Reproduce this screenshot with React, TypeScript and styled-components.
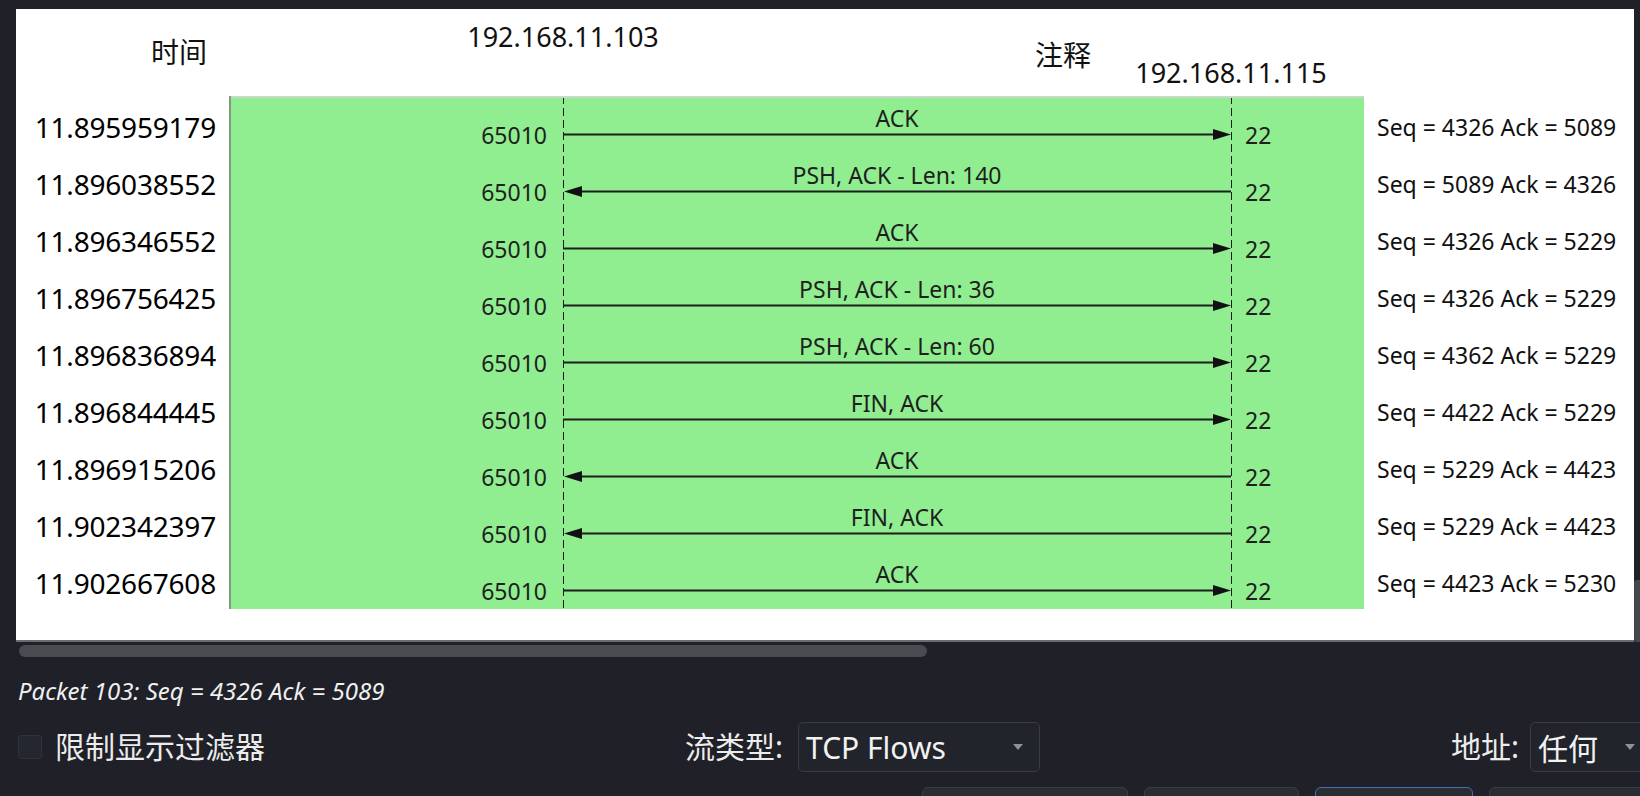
import styled, { createGlobalStyle } from "styled-components";

interface Flow {
  time: string;
  label: string;
  dir: "right" | "left";
  comment: string;
}

const flows: Flow[] = [
  { time: "11.895959179", label: "ACK", dir: "right", comment: "Seq = 4326 Ack = 5089" },
  { time: "11.896038552", label: "PSH, ACK - Len: 140", dir: "left", comment: "Seq = 5089 Ack = 4326" },
  { time: "11.896346552", label: "ACK", dir: "right", comment: "Seq = 4326 Ack = 5229" },
  { time: "11.896756425", label: "PSH, ACK - Len: 36", dir: "right", comment: "Seq = 4326 Ack = 5229" },
  { time: "11.896836894", label: "PSH, ACK - Len: 60", dir: "right", comment: "Seq = 4362 Ack = 5229" },
  { time: "11.896844445", label: "FIN, ACK", dir: "right", comment: "Seq = 4422 Ack = 5229" },
  { time: "11.896915206", label: "ACK", dir: "left", comment: "Seq = 5229 Ack = 4423" },
  { time: "11.902342397", label: "FIN, ACK", dir: "left", comment: "Seq = 5229 Ack = 4423" },
  { time: "11.902667608", label: "ACK", dir: "right", comment: "Seq = 4423 Ack = 5230" },
];

const GlobalStyle = createGlobalStyle`
  html, body {
    margin: 0;
    padding: 0;
    background: #1f2028;
  }
  body {
    font-family: "Noto Sans", "Noto Sans CJK SC", sans-serif;
  }
`;

function Arrow({ dir }: { dir: "right" | "left" }) {
  return (
    <ArrowSvg width="668" height="11" viewBox="0 0 668 11">
      {dir === "right" ? (
        <>
          <line x1="0" y1="5.5" x2="654" y2="5.5" stroke="#1c1f1c" strokeWidth="2" />
          <polygon points="650,0 668,5.5 650,11" fill="#111" />
        </>
      ) : (
        <>
          <line x1="14" y1="5.5" x2="668" y2="5.5" stroke="#1c1f1c" strokeWidth="2" />
          <polygon points="1,5.5 19,0 19,11" fill="#111" />
        </>
      )}
    </ArrowSvg>
  );
}

function App() {
  return (
    <Screen>
      <GlobalStyle />
      <Viewport>
        <Panel>
          <Header>
            <HeadTime>时间</HeadTime>
            <HostLabel $col={3} $top={10}>192.168.11.103</HostLabel>
            <NoteHead>注释</NoteHead>
            <HostLabel $col={4} $top={46}>192.168.11.115</HostLabel>
          </Header>
          <Body>
            <TimeColumn>
              {flows.map(f => (
                <TimeCell key={f.time}>{f.time}</TimeCell>
              ))}
            </TimeColumn>
            <Diagram>
              {flows.map(f => (
                <FlowRow key={f.time}>
                  <PortLeft>65010</PortLeft>
                  <FlowCell>
                    <FlowLabel>{f.label}</FlowLabel>
                    <Arrow dir={f.dir} />
                  </FlowCell>
                  <PortRight>22</PortRight>
                </FlowRow>
              ))}
            </Diagram>
            <CommentColumn>
              {flows.map(f => (
                <CommentCell key={f.time}>{f.comment}</CommentCell>
              ))}
            </CommentColumn>
          </Body>
        </Panel>
        <VScroll>
          <VThumb />
        </VScroll>
      </Viewport>

      <HScroll>
        <HThumb />
      </HScroll>

      <PacketInfo>Packet 103: Seq = 4326 Ack = 5089</PacketInfo>

      <Controls>
        <CheckGroup>
          <CheckBox />
          <ControlText>限制显示过滤器</ControlText>
        </CheckGroup>
        <FieldGroup>
          <ControlText>流类型:</ControlText>
          <Combo $width={242}>
            <ComboText>TCP Flows</ComboText>
            <Caret />
          </Combo>
        </FieldGroup>
        <div />
        <FieldGroup $edge>
          <ControlText>地址:</ControlText>
          <Combo $width={122}>
            <ComboText>任何</ComboText>
            <Caret />
          </Combo>
        </FieldGroup>
      </Controls>

      <ButtonRow>
        <DialogButton $width={206} />
        <DialogButton $width={155} />
        <DialogButton $width={158} $primary />
        <DialogButton $width={170} />
      </ButtonRow>
    </Screen>
  );
}

export default App;

const Screen = styled.div`
  width: 1640px;
  height: 796px;
  overflow: hidden;
  background: #1f2028;
`;

const Viewport = styled.div`
  display: flex;
  padding: 9px 0 0 16px;
`;

const Panel = styled.div`
  width: 1618px;
  height: 633px;
  box-sizing: border-box;
  background: #fff;
  border-bottom: 2px solid #6c6c70;
  display: flex;
  flex-direction: column;
  color: #111;
`;

const VScroll = styled.div`
  width: 6px;
  display: flex;
  flex-direction: column;
  justify-content: flex-end;
`;

const VThumb = styled.div`
  height: 62px;
  border-radius: 3px 0 0 3px;
  background: #46474d;
`;

const Header = styled.div`
  height: 87px;
  display: grid;
  grid-template-columns: 213px 334px 668px 133px 1fr;
  grid-template-rows: 87px;
  font-size: 27px;
  line-height: 36px;
`;

const HeadTime = styled.div`
  grid-row: 1;
  grid-column: 1;
  justify-self: end;
  align-self: start;
  margin-top: 25px;
  padding-right: 22px;
  font-size: 28px;
`;

const HostLabel = styled.div<{ $col: number; $top: number }>`
  grid-row: 1;
  grid-column: ${p => p.$col};
  justify-self: start;
  align-self: start;
  margin-top: ${p => p.$top}px;
  transform: translateX(-50%);
  white-space: nowrap;
`;

const NoteHead = styled.div`
  grid-row: 1;
  grid-column: 3;
  justify-self: end;
  align-self: start;
  margin: 28px 140px 0 0;
  font-size: 28px;
`;

const Body = styled.div`
  display: flex;
  height: 513px;
`;

const TimeColumn = styled.div`
  width: 213px;
  display: flex;
  flex-direction: column;
`;

const TimeCell = styled.div`
  height: 57px;
  box-sizing: border-box;
  padding: 14px 13px 0 0;
  text-align: right;
  font-size: 28px;
  letter-spacing: -0.2px;
  line-height: 34px;
  color: #000;
`;

const Diagram = styled.div`
  width: 1135px;
  display: flex;
  flex-direction: column;
  background-color: #90ee90;
  background-image:
    repeating-linear-gradient(to bottom, #1a1a1a 0 8px, transparent 8px 12px),
    repeating-linear-gradient(to bottom, #1a1a1a 0 8px, transparent 8px 12px);
  background-size: 1px 100%, 1px 100%;
  background-position: 334px 0, 1002px 0;
  background-repeat: no-repeat;
  box-shadow: inset 2px 0 0 #7f9a7f, inset 0 2px 0 #c9d9c9;
`;

const FlowRow = styled.div`
  height: 57px;
  display: grid;
  grid-template-columns: 334px 668px 1fr;
  font-size: 23px;
  color: #1f1f1f;
`;

const PortLeft = styled.div`
  padding: 26px 16px 0 0;
  text-align: right;
  line-height: 26px;
`;

const PortRight = styled.div`
  padding: 26px 0 0 14px;
  line-height: 26px;
`;

const FlowCell = styled.div`
  display: flex;
  flex-direction: column;
  align-items: center;
  padding-top: 12px;
`;

const FlowLabel = styled.div`
  line-height: 21px;
  white-space: nowrap;
`;

const ArrowSvg = styled.svg`
  display: block;
`;

const CommentColumn = styled.div`
  flex: 1;
  display: flex;
  flex-direction: column;
`;

const CommentCell = styled.div`
  height: 57px;
  box-sizing: border-box;
  padding: 16px 0 0 13px;
  font-size: 23px;
  line-height: 30px;
  color: #111;
  white-space: nowrap;
`;

const HScroll = styled.div`
  margin-top: 3px;
  height: 12px;
  padding-left: 19px;
`;

const HThumb = styled.div`
  width: 908px;
  height: 12px;
  border-radius: 6px;
  background: #4a4b51;
`;

const PacketInfo = styled.div`
  margin-top: 19px;
  padding-left: 18px;
  font-size: 24px;
  line-height: 30px;
  font-style: italic;
  color: #f0f0f0;
`;

const Controls = styled.div`
  margin-top: 16px;
  height: 50px;
  padding-left: 18px;
  display: grid;
  grid-template-columns: 667px auto 1fr auto;
  align-items: center;
`;

const CheckGroup = styled.div`
  display: flex;
  align-items: center;
  gap: 13px;
`;

const CheckBox = styled.div`
  width: 24px;
  height: 24px;
  box-sizing: border-box;
  border: 1px solid #30323a;
  border-radius: 3px;
  background: #252730;
`;

const ControlText = styled.span`
  font-size: 30px;
  line-height: 36px;
  color: #ececec;
  white-space: nowrap;
`;

const FieldGroup = styled.div<{ $edge?: boolean }>`
  display: flex;
  align-items: center;
  gap: ${p => (p.$edge ? 11 : 15)}px;
  margin-right: ${p => (p.$edge ? -12 : 0)}px;
`;

const Combo = styled.div<{ $width: number }>`
  width: ${p => p.$width}px;
  height: 50px;
  box-sizing: border-box;
  display: flex;
  align-items: center;
  justify-content: space-between;
  padding: 0 16px 0 7px;
  border: 1px solid #3a3c44;
  border-radius: 5px;
  background: #22242c;
`;

const ComboText = styled.span`
  font-size: 30px;
  color: #f2f2f2;
  white-space: nowrap;
`;

const Caret = styled.span`
  width: 0;
  height: 0;
  border-left: 5px solid transparent;
  border-right: 5px solid transparent;
  border-top: 6px solid #8e9096;
`;

const ButtonRow = styled.div`
  margin-top: 15px;
  padding-left: 922px;
  display: flex;
  gap: 16px;
`;

const DialogButton = styled.div<{ $width: number; $primary?: boolean }>`
  flex: none;
  width: ${p => p.$width}px;
  height: 50px;
  box-sizing: border-box;
  border: 1px solid ${p => (p.$primary ? "#4a6cb0" : "#3a3c44")};
  border-radius: 6px;
  background: #2a2c33;
`;
